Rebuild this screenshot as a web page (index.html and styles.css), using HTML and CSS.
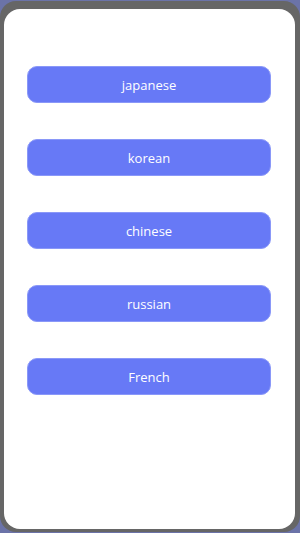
FILE: index.html
```html
<!DOCTYPE html>
<html lang="en">
<head>
    <meta charset="UTF-8">
    <meta name="viewport" content="width=device-width, initial-scale=1.0">
    <title>Languages</title>
    <link rel="stylesheet" href="styles.css">
</head>
<body>

    <div class="frame">
        <div class="card">
            <button class="lang-btn">japanese</button>
            <button class="lang-btn">korean</button>
            <button class="lang-btn">chinese</button>
            <button class="lang-btn">russian</button>
            <button class="lang-btn">French</button>
        </div>
    </div>

</body>
</html>
```

FILE: styles.css
```css
html, body {
    height: 100%;
}

body {
    margin: 0;
    padding: 1px 0;
    box-sizing: border-box;
    background-color: #6b73a8;
    font-family: "Open Sans", "Noto Sans", sans-serif;
}

.frame {
    height: 100%;
    box-sizing: border-box;
    background-color: #666666;
    border-radius: 16px;
    padding: 8px 5px 3px 4px;
}

.card {
    height: 100%;
    box-sizing: border-box;
    background-color: white;
    border-radius: 16px;
    padding: 57px 24px 0 23px;
    display: flex;
    flex-direction: column;
    gap: 36px;
}

    .lang-btn {
        height: 37px;
        width: 100%;
        background-color: #6779f6;
        color: white;
        border: 1px solid #8a98f8;
        border-radius: 10px;
        font-family: inherit;
        font-size: 13px;
        cursor: pointer;
    }
```
